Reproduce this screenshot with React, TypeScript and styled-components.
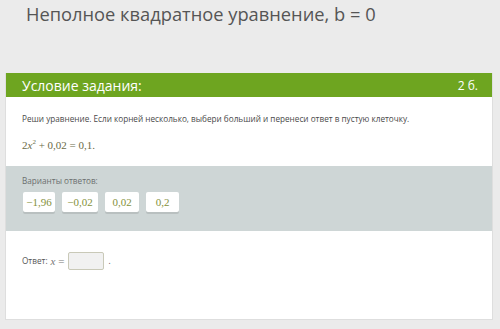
import React from "react";
import styled, { createGlobalStyle } from "styled-components";

const GlobalStyle = createGlobalStyle`
  html, body {
    margin: 0;
    padding: 0;
    background: #ebebeb;
    font-family: "Open Sans", "Liberation Sans", sans-serif;
  }
`;

const Page = styled.div`
  width: 500px;
  height: 329px;
  overflow: hidden;
  background: #ebebeb;
`;

const Title = styled.h1`
  margin: 0;
  height: 73px;
  padding: 2px 0 0 26px;
  box-sizing: border-box;
  font-size: 18.3px;
  font-weight: 400;
  line-height: 24px;
  color: #555;
`;

const Card = styled.div`
  margin: 0 7px 0 5px;
  height: 247px;
  background: #fff;
  border: 1px solid #dedede;
  border-top: none;
  box-sizing: border-box;
  display: flex;
  flex-direction: column;
`;

const Header = styled.div`
  height: 24px;
  background: #6ea520;
  color: #fff;
  display: flex;
  align-items: center;
  justify-content: space-between;
  padding: 0 14px 0 16px;
  font-size: 14px;
`;

const Points = styled.span`
  font-size: 12px;
`;

const Section = styled.div<{ $gray?: boolean }>`
  padding: ${(p) => (p.$gray ? "9px 16px 0" : "16px 16px 0")};
  background: ${(p) => (p.$gray ? "#ced6d6" : "#fff")};
  height: ${(p) => (p.$gray ? "65px" : "auto")};
  box-sizing: border-box;
`;

const Text = styled.p<{ $muted?: boolean }>`
  margin: 0;
  font-size: 8.2px;
  line-height: 12px;
  color: ${(p) => (p.$muted ? "#6b6f6f" : "#4a4a4a")};
`;

const Math = styled.span<{ $color?: string }>`
  font-family: "Liberation Serif", "DejaVu Serif", serif;
  font-size: 11px;
  color: ${(p) => p.$color || "#6b6b48"};
  white-space: nowrap;
`;

const Var = styled.i`
  font-style: italic;
`;

const Sup = styled.sup`
  font-size: 7px;
`;

const Equation = styled.div`
  margin: 10px 0 14px;
  line-height: 14px;
`;

const Options = styled.div`
  display: flex;
  gap: 7px;
  margin-top: 5px;
  padding-left: 1px;
`;

const Option = styled.div<{ $w: number }>`
  width: ${(p) => p.$w}px;
  height: 20px;
  background: #fff;
  border-radius: 2px;
  box-shadow: 0 2px 0 #b9c0c0;
  display: flex;
  align-items: center;
  justify-content: center;
`;

const AnswerRow = styled.div`
  display: flex;
  align-items: center;
  gap: 3px;
  padding: 21px 16px 0;
  font-size: 8.2px;
  color: #555;
`;

const AnswerBox = styled.span`
  width: 34px;
  height: 16px;
  border: 1px solid #c9c9b8;
  border-radius: 2px;
  background: #f1f1f1;
  margin: 0 1px;
`;

const options = [
  { label: "−1,96", w: 32 },
  { label: "−0,02", w: 36 },
  { label: "0,02", w: 34 },
  { label: "0,2", w: 33 },
];

export default function App() {
  return (
    <Page>
      <GlobalStyle />
      <Title>Неполное квадратное уравнение, b = 0</Title>
      <Card>
        <Header>
          <span>Условие задания:</span>
          <Points>2 б.</Points>
        </Header>
        <Section>
          <Text>
            Реши уравнение. Если корней несколько, выбери больший и перенеси ответ в пустую клеточку.
          </Text>
          <Equation>
            <Math>
              2<Var>x</Var>
              <Sup>2</Sup> + 0,02 = 0,1.
            </Math>
          </Equation>
        </Section>
        <Section $gray>
          <Text $muted>Варианты ответов:</Text>
          <Options>
            {options.map((o) => (
              <Option key={o.label} $w={o.w}>
                <Math $color="#84913c">{o.label}</Math>
              </Option>
            ))}
          </Options>
        </Section>
        <AnswerRow>
          <span>Ответ:</span>
          <Math $color="#777">
            <Var>x</Var> =
          </Math>
          <AnswerBox />
          <span>.</span>
        </AnswerRow>
      </Card>
    </Page>
  );
}
